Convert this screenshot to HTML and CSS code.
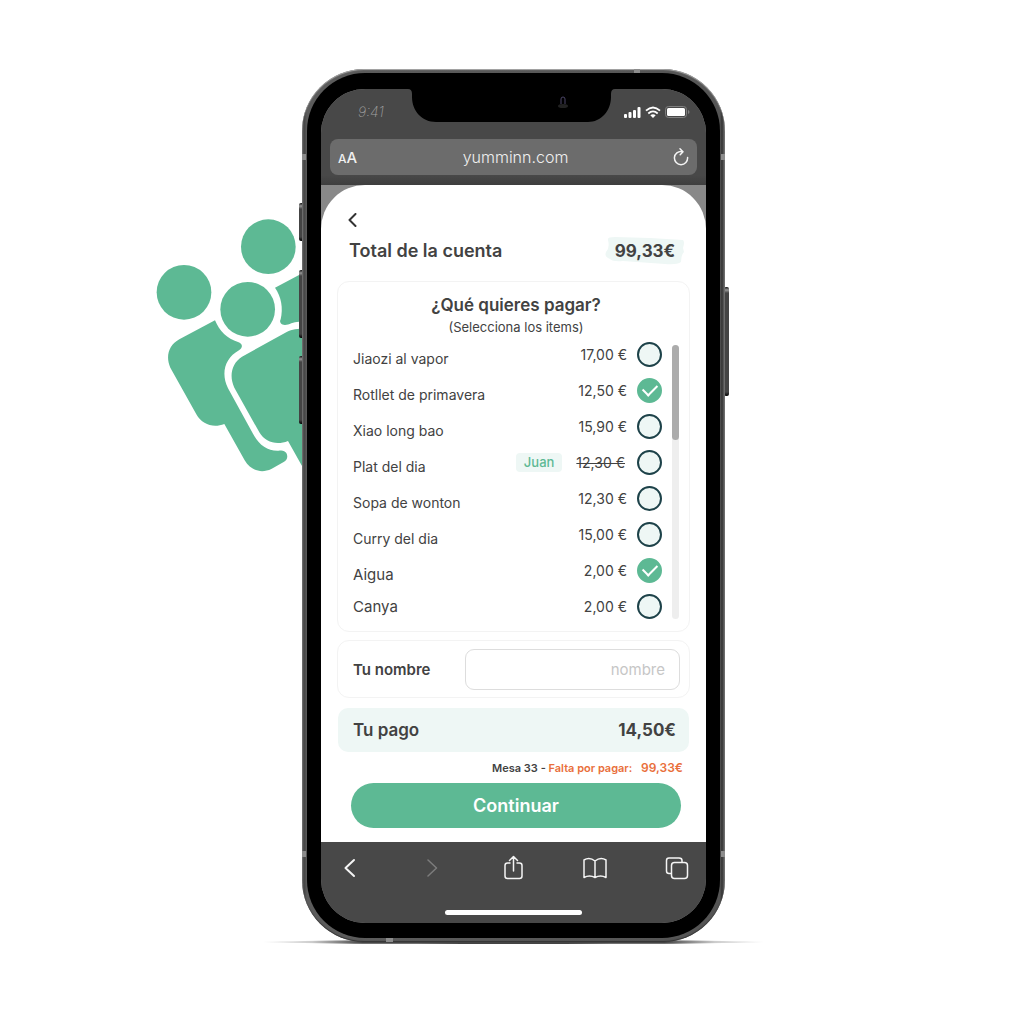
FILE: index.html
```html
<!DOCTYPE html>
<html lang="es">
<head>
<meta charset="utf-8">
<meta name="viewport" content="width=device-width, initial-scale=1">
<title>Yumminn</title>
<link rel="stylesheet" href="styles.css">
</head>
<body>
<main class="stage">
  <div class="device">
    <div class="ground"></div>
    <svg class="people" viewBox="0 0 570 840" aria-hidden="true">
      <circle cx="102" cy="262" r="82"/>
      <circle cx="355" cy="125" r="82"/>
      <circle cx="293" cy="313" r="82"/>
      <path d="M195 346C208 378 232 402 264 411C278 415 280 428 267 436C224 460 212 505 234 550L309 686C327 720 352 738 385 737C398 735 404 737 409 744C415 755 411 765 401 771L364 792C334 806 302 797 284 766L223 657C190 670 157 659 139 628L61 488C46 454 56 421 88 403Z"/>
      <path d="M276 455L410 381C430 370 447 371 480 371V826L414 708C380 722 346 712 328 682L253 548C236 512 246 474 276 455Z"/>
      <path d="M375 248L447 210H480V350H447C430 350 417 359 405 360C394 360 387 352 392 343C400 309 394 275 375 248Z"/>
    </svg>
    <span class="key key-mute"></span>
    <span class="key key-up"></span>
    <span class="key key-down"></span>
    <span class="key key-power"></span>
    <div class="frame">
      <span class="band band-top"></span>
      <span class="band band-bottom"></span>
      <span class="band band-left"></span>
      <span class="band band-right"></span>
      <span class="band band-left band-low"></span>
      <span class="band band-right band-low"></span>
      <div class="bezel">
        <div class="screen">
          <header class="browser-top">
            <div class="status">
              <span class="time">9:41</span>
              <svg class="notch" viewBox="0 0 207 33" aria-hidden="true">
                <path d="M0 0Q4 0 4 5V8C4 22 14 33 28 33H180C193 33 203 22 203 8V5Q203 0 207 0Z"/>
                <ellipse cx="155" cy="17" rx="5" ry="2" fill="#222"/>
                <path d="M153 15V10Q153 8 155 8Q157 8 157 10V15" style="fill:none" stroke="#4c4668"/>
              </svg>
              <svg class="signals" viewBox="0 0 66 14" aria-hidden="true">
                <g fill="#fff">
                  <rect x="0" y="9" width="3" height="4" rx="1"/>
                  <rect x="4.500" y="7" width="3" height="6" rx="1"/>
                  <rect x="9" y="5" width="3" height="8" rx="1"/>
                  <rect x="13.500" y="2" width="3" height="11" rx="1"/>
                  <path d="M29 13L26.300 10.300Q29 8 31.700 10.300Z"/>
                  <rect x="43" y="3" width="18" height="8" rx="1.500"/>
                </g>
                <path d="M22 5.700Q29 -.8 36 5.700M24.300 8.500Q29 4.200 33.700 8.500" fill="none" stroke="#fff" stroke-width="1.800"/>
                <rect x="41.500" y="1.500" width="21" height="11" rx="3" fill="none" stroke="#808080"/>
                <path d="M64 5V9Q65.500 8.500 65.500 7Q65.500 5.500 64 5Z" fill="#808080"/>
              </svg>
            </div>
            <div class="address">
              <span class="text-size"><small>A</small>A</span>
              <span class="host">yumminn.com</span>
              <button class="icon-button" type="button" aria-label="Recargar">
                <svg width="16" height="18" viewBox="0 0 16 18"><path d="M9 3.500A6.600 6.600 0 1 0 14.600 9.500M7 .800L10 3.700L7.200 6.700"/></svg>
              </button>
            </div>
          </header>
          <form class="sheet">
            <a class="back" href="#" aria-label="Volver">
              <svg width="9" height="14" viewBox="0 0 9 14"><path d="M7.500 1L1.500 7L7.500 13"/></svg>
            </a>
            <div class="total">
              <h1>Total de la cuenta</h1>
              <div class="total-amount">
                <svg viewBox="0 0 80 30" preserveAspectRatio="none" aria-hidden="true"><path d="M3 4Q2 1 10 1L45 2L78 4Q80 6 78 12L79 16Q76 19 76 26Q72 29 60 28L18 25Q8 26 5 23Q-1 21 1 16Q5 12 3 4Z"/></svg>
                <strong>99,33€</strong>
              </div>
            </div>
            <section class="items">
              <h2>¿Qué quieres pagar?</h2>
              <p>(Selecciona los items)</p>
              <div class="items-body">
                <ul>
                  <li><label><span class="name">Jiaozi al vapor</span><span class="price">17,00 €</span><input type="checkbox"></label></li>
                  <li><label><span class="name">Rotllet de primavera</span><span class="price">12,50 €</span><input type="checkbox" checked></label></li>
                  <li><label><span class="name">Xiao long bao</span><span class="price">15,90 €</span><input type="checkbox"></label></li>
                  <li><label><span class="name">Plat del dia</span><span class="tag">Juan</span><s class="price taken">12,30 €</s><input type="checkbox"></label></li>
                  <li><label><span class="name">Sopa de wonton</span><span class="price">12,30 €</span><input type="checkbox"></label></li>
                  <li><label><span class="name">Curry del dia</span><span class="price">15,00 €</span><input type="checkbox"></label></li>
                  <li><label><span class="name drink">Aigua</span><span class="price">2,00 €</span><input type="checkbox" checked></label></li>
                  <li><label><span class="name drink">Canya</span><span class="price">2,00 €</span><input type="checkbox"></label></li>
                </ul>
                <div class="track"><div class="thumb"></div></div>
              </div>
            </section>
            <div class="who">
              <label for="nombre">Tu nombre</label>
              <input id="nombre" type="text" placeholder="nombre">
            </div>
            <div class="payment"><span>Tu pago</span><strong>14,50€</strong></div>
            <p class="pending">Mesa 33 - <span>Falta por pagar:</span> <b>99,33€</b></p>
            <button class="continue" type="button">Continuar</button>
          </form>
          <footer class="browser-bottom">
            <nav>
              <button class="icon-button" type="button" aria-label="Atrás"><svg width="24" height="26" viewBox="0 0 24 26"><path d="M16 5L7.500 13L16 21" stroke-width="2"/></svg></button>
              <button class="icon-button faded" type="button" aria-label="Adelante"><svg width="24" height="26" viewBox="0 0 24 26"><path d="M8 5L16.500 13L8 21"/></svg></button>
              <button class="icon-button" type="button" aria-label="Compartir"><svg width="24" height="26" viewBox="0 0 24 26"><path d="M8 8H5.500Q3 8 3 10.500V21Q3 23.500 5.500 23.500H17.500Q20 23.500 20 21V10.500Q20 8 17.500 8H15M11.500 16V2M7.500 5.500L11.500 1.500L15.500 5.500"/></svg></button>
              <button class="icon-button" type="button" aria-label="Marcadores"><svg width="24" height="26" viewBox="0 0 24 26"><path d="M12 6Q6.500 1.500 1 5V22.500Q6.500 19.500 12 22.500Q17.500 19.500 23 22.500V5Q17.500 1.500 12 6V22.500"/></svg></button>
              <button class="icon-button" type="button" aria-label="Pestañas"><svg width="24" height="26" viewBox="0 0 24 26"><rect x="6.500" y="7.500" width="16" height="16" rx="3"/><path d="M6 18.500H4Q1.500 18.500 1.500 16V5.500Q1.500 3 4 3H14Q17 3 17 5.500V7"/></svg></button>
            </nav>
            <div class="home"></div>
          </footer>
        </div>
      </div>
    </div>
  </div>
</main>
</body>
</html>
```
FILE: styles.css
```css
* { box-sizing: border-box; }

body {
  margin: 0;
  background: #fff;
  color: #424242;
  font-family: Inter, "Open Sans", sans-serif;
}

h1, h2, p, ul { margin: 0; padding: 0; }
ul { list-style: none; }
button, input { font: inherit; }

.stage {
  display: flex;
  justify-content: center;
  padding: 69px 0 80px 3px;
}

/* Phone shell */
.device {
  position: relative;
  width: min(423px, 100%);
}

.ground {
  position: absolute;
  left: -40px;
  right: -40px;
  bottom: -5px;
  height: 10px;
  background: linear-gradient(90deg, transparent, #ccc 10%, #444 20%, #444 80%, #ccc 90%, transparent);
  clip-path: ellipse(50% 20% at 50% 50%);
}

.people {
  position: absolute;
  left: -152px;
  top: 136px;
  width: 190px;
  height: 280px;
  fill: #5db994;
}

.key {
  position: absolute;
  left: -3px;
  width: 5px;
  border-radius: 2px;
  background: linear-gradient(#111, #999 3px, #444 6px, #444 calc(100% - 4px), #000);
}
.key-mute { top: 134px; height: 38px; }
.key-up { top: 201px; height: 68px; }
.key-down { top: 287px; height: 68px; }
.key-power { top: 218px; left: auto; right: -4px; height: 109px; }

.frame {
  position: relative;
  padding: 4px 5px;
  border-radius: 62px;
  background: linear-gradient(90deg, #777, #444 2px, #5c5c5c 5px, #555 calc(100% - 5px), #333 calc(100% - 3px), #777);
  box-shadow: inset 0 1px 1px #aaa, inset 0 -1px 1px #333;
}

.band { position: absolute; background: #8c8c8c; }
.band-top { top: 0; left: 332px; width: 6px; height: 4px; }
.band-bottom { bottom: 0; left: 84px; width: 7px; height: 4px; }
.band-left { left: 0; top: 85px; width: 4px; height: 6px; }
.band-right { right: 0; top: 85px; width: 4px; height: 6px; }
.band-low { top: 782px; }

.bezel {
  padding: 16px 14px 15px;
  border-radius: 58px;
  background: #000;
}

.screen {
  overflow: hidden;
  border-radius: 44px;
  background: #888;
}

/* Browser chrome */
.browser-top {
  padding: 0 9px 10px;
  background: linear-gradient(#484848 90%, #3e3e3e);
}

.status {
  display: grid;
  grid-template-columns: 78px 207px 1fr;
  align-items: start;
  height: 50px;
}
.time {
  padding: 13px 0 0 28px;
  color: #a0a0a0;
  font-size: 14px;
  font-style: italic;
  font-weight: 200;
  line-height: 20px;
}
.notch { width: 207px; height: 33px; }
.signals { width: 66px; height: 14px; margin: 16px 0 0 9px; }

.address {
  display: grid;
  grid-template-columns: 1fr auto 1fr;
  align-items: center;
  height: 36px;
  padding: 0 8px;
  border-radius: 8px;
  background: #6c6c6c;
  color: #f0f0f0;
  font-size: 16px;
  font-weight: 300;
}
.host { padding-left: 4px; }
.text-size { font-size: 15px; font-weight: 500; }
.text-size small { font-size: 12px; }
.address .icon-button { justify-self: end; }

.icon-button {
  display: flex;
  padding: 0;
  border: 0;
  background: none;
}
.icon-button svg, .back svg {
  fill: none;
  stroke: #f4f4f4;
  stroke-width: 1.5px;
  stroke-linecap: round;
  stroke-linejoin: round;
}
.faded { opacity: .3; }

/* Bill sheet */
.sheet {
  display: flex;
  flex-direction: column;
  padding: 28px 16px 14px;
  border-radius: 44px 44px 0 0;
  background: #fff;
}

.back { display: flex; align-self: start; margin-left: 11px; }
.back svg { stroke: #333; stroke-width: 2px; }

.total {
  display: flex;
  justify-content: space-between;
  align-items: center;
  height: 30px;
  margin: 9px 5px 15px 12px;
}
h1, h2 { font-weight: 600; line-height: 24px; }
h1 { font-size: 18px; }
h2 { font-size: 17px; }
.total-amount {
  display: grid;
  place-items: center;
  width: 80px;
  height: 30px;
}
.total-amount > * { grid-area: 1 / 1; }
.total-amount svg { width: 80px; height: 30px; fill: #eef7f5; }
.total-amount strong { font-size: 17px; font-weight: 700; }

.items, .who {
  border: 1px solid #f3f3f3;
  border-radius: 12px;
}
.items { padding: 11px 10px 7px 15px; text-align: center; }
.items p { font-size: 13px; line-height: 20px; }
.items-body { display: flex; gap: 10px; margin-top: -1px; }
.items ul { flex: 1; }
.items label {
  display: flex;
  align-items: center;
  gap: 10px;
  height: 36px;
  font-size: 14px;
}
.name { margin-right: auto; padding-top: 8px; }
.drink { font-size: 15px; }
li:last-child .name { padding-top: 0; }
.tag {
  margin-right: 4px;
  padding: 0 8px;
  border-radius: 4px;
  background: #eef7f5;
  color: #5db994;
  font-size: 13px;
  font-weight: 500;
  line-height: 19px;
}
.taken { padding-right: 2px; }
.items input {
  display: grid;
  place-items: center;
  width: 25px;
  height: 25px;
  margin: 0;
  border: 2px solid #1d4249;
  border-radius: 50%;
  background: #eef7f5;
  appearance: none;
}
.items input:checked { border-color: #5db994; background: #5db994; }
.items input:checked::before {
  content: "";
  width: 12px;
  height: 7px;
  margin-bottom: 4px;
  border: solid #fff;
  border-width: 0 0 2px 2px;
  transform: rotate(-45deg);
}
.track {
  width: 7px;
  margin: 9px 0 5px;
  border-radius: 4px;
  background: #eee;
}
.thumb { height: 95px; border-radius: 4px; background: #acacac; }

.who {
  display: flex;
  align-items: center;
  justify-content: space-between;
  margin-top: 8px;
  padding: 8px 9px 7px 15px;
  font-size: 15px;
  font-weight: 600;
}
.who input {
  width: 215px;
  height: 41px;
  padding: 0 14px;
  border: 1px solid #ddd;
  border-radius: 9px;
  background: #fff;
  font-weight: 400;
  text-align: right;
}
.who input::placeholder { color: #c6c6c6; }

.payment {
  display: flex;
  align-items: center;
  justify-content: space-between;
  height: 44px;
  margin: 10px 1px 0;
  padding: 0 13px 0 15px;
  border-radius: 10px;
  background: #eef7f5;
  font-size: 17px;
  font-weight: 600;
}
.payment strong { font-weight: 700; }

.pending {
  margin: 6px 7px 5px 0;
  font-size: 11px;
  font-weight: 600;
  line-height: 20px;
  text-align: right;
}
.pending span, .pending b { color: #e96f3b; }
.pending b { margin-left: 6px; font-size: 12px; font-weight: 600; }

.continue {
  height: 45px;
  margin: 0 9px 0 14px;
  border: 0;
  border-radius: 23px;
  background: #5db994;
  color: #fff;
  font-size: 18px;
  font-weight: 600;
}

/* Browser toolbar */
.browser-bottom { padding: 13px 17px 8px; background: #484848; }
.browser-bottom nav { display: flex; justify-content: space-between; }
.home {
  width: 137px;
  height: 5px;
  margin: 29px auto 0;
  border-radius: 3px;
  background: #fff;
}
```
